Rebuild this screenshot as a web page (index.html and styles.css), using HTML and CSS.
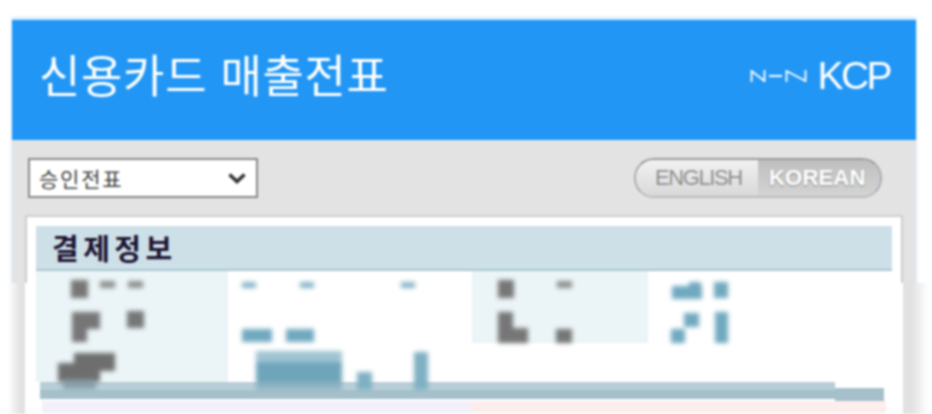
FILE: index.html
```html
<!DOCTYPE html>
<html lang="ko">
<head>
<meta charset="utf-8">
<title>신용카드 매출전표</title>
<link rel="stylesheet" href="styles.css">
</head>
<body>
<main class="panel">
  <div class="veil"></div>
  <header class="head">
    <h1 class="title">신용카드 매출전표</h1>
    <div class="logo">
      <svg class="nhn" width="58" height="14" viewBox="0 0 58 14" aria-hidden="true">
        <path d="M1.500 1v12M1.500 2l13 10M14.500 1v12M19 7h13M36.500 1v12M36.500 2l19 10M55.500 1v12" fill="none" stroke="#fff" stroke-width="1.800"/>
      </svg>
      <span class="kcp">KCP</span>
    </div>
  </header>
  <div class="tools">
    <div class="select">
      <span>승인전표</span>
      <svg width="20" height="12" viewBox="0 0 20 12" aria-hidden="true"><path d="M2.500 2.500 10 9.500l7.500-7" fill="none" stroke="#333" stroke-width="3.600"/></svg>
    </div>
    <div class="lang">
      <span class="en">ENGLISH</span>
      <span class="ko">KOREAN</span>
    </div>
  </div>
  <section class="card">
    <h2 class="sect">결제정보</h2>
    <div class="info">
      <div class="grid">
        <div class="lab lab-a"></div>
        <div class="val"></div>
        <div class="lab lab-b"></div>
        <div class="val"></div>
      </div>
      <div class="bar">
        <div class="bar-top"></div>
        <div class="bar-low"></div>
      </div>
      <div class="tint">
        <div class="tint-a"></div>
        <div class="tint-b"></div>
      </div>
    </div>
    <svg class="mask" width="878" height="199" viewBox="0 0 878 199" aria-hidden="true">
      <defs><filter id="soft" x="-20%" y="-20%" width="140%" height="140%"><feGaussianBlur stdDeviation="2"/></filter></defs>
      <g filter="url(#soft)">
        <g fill="#767676">
          <rect x="46" y="65" width="17" height="18"/>
          <rect x="47" y="97" width="28" height="17"/>
          <rect x="47" y="97" width="15" height="30"/>
          <rect x="102" y="96" width="17" height="17"/>
          <rect x="473" y="65" width="16" height="18"/>
          <rect x="473" y="97" width="15" height="31"/>
          <rect x="473" y="113" width="30" height="15"/>
          <rect x="531" y="114" width="16" height="14"/>
        </g>
        <g fill="#6e6e6e">
          <rect x="49" y="138" width="41" height="18"/>
          <rect x="33" y="148" width="42" height="19"/>
        </g>
        <rect x="38" y="165" width="33" height="9" fill="#86a0a8"/>
        <g fill="#8f8f8f">
          <rect x="75" y="66" width="15" height="7"/>
          <rect x="103" y="66" width="15" height="7"/>
          <rect x="532" y="66" width="15" height="7"/>
        </g>
        <g fill="#85b6c8">
          <rect x="217" y="67" width="14" height="6"/>
          <rect x="275" y="67" width="14" height="6"/>
          <rect x="376" y="67" width="14" height="6"/>
        </g>
        <g fill="#6fa9bf">
          <rect x="217" y="114" width="30" height="13"/>
          <rect x="261" y="114" width="28" height="13"/>
          <rect x="647" y="71" width="30" height="13"/>
          <rect x="664" y="67" width="12" height="8"/>
          <rect x="689" y="67" width="14" height="16"/>
          <rect x="646" y="114" width="14" height="14"/>
          <rect x="659" y="98" width="15" height="14"/>
          <rect x="690" y="97" width="13" height="31"/>
        </g>
        <rect x="231" y="136" width="86" height="12" fill="#a0c5d2"/>
        <rect x="231" y="147" width="86" height="21" fill="#6ea5bb"/>
        <rect x="231" y="167" width="86" height="8" fill="#8db2c1"/>
        <rect x="332" y="157" width="15" height="18" fill="#7fb0c3"/>
        <rect x="389" y="137" width="14" height="38" fill="#7fb0c3"/>
      </g>
    </svg>
  </section>
</main>
</body>
</html>
```
FILE: styles.css
```css
html, body {
  margin: 0;
  padding: 0;
  width: 932px;
  height: 414px;
  overflow: hidden;
  background: #fff;
}
.panel {
  position: relative;
  margin: 20px 0 0 12px;
  width: 904px;
  height: 394px;
  background: #e3e3e3;
  filter: blur(0.9px);
  box-shadow: 0 -2px 3px rgba(33, 150, 245, 0.3);
  font-family: "Noto Sans CJK KR", "Noto Sans", sans-serif;
}
.veil {
  position: absolute;
  left: -12px;
  top: 263px;
  width: 932px;
  height: 131px;
  background: linear-gradient(90deg, #fff 8px, #e2e2e2 20px, #e2e2e2 912px, #fff 928px);
}
.head {
  position: relative;
  height: 120px;
  background: #2196f5;
  display: flex;
  align-items: center;
  justify-content: space-between;
  padding: 0 26px 0 27px;
  box-sizing: border-box;
}
.title {
  margin: -12px 0 0;
  font-size: 45px;
  font-weight: 400;
  color: #fff;
  letter-spacing: 0.650px;
  line-height: 60px;
}
.logo {
  display: flex;
  align-items: center;
  gap: 10px;
  margin-top: -8px;
}
.kcp {
  font-family: "Liberation Sans", sans-serif;
  font-size: 39px;
  letter-spacing: -2.600px;
  color: #fff;
  line-height: 44px;
}
.tools {
  position: relative;
  display: flex;
  justify-content: space-between;
  padding: 18px 34px 0 16px;
  height: 75px;
  box-sizing: border-box;
}
.select {
  width: 230px;
  height: 40px;
  box-sizing: border-box;
  border: 2px solid #888;
  background: #fff;
  display: flex;
  align-items: center;
  justify-content: space-between;
  padding: 0 9px;
  font-size: 21px;
  letter-spacing: 1.800px;
  color: #444;
}
.lang {
  width: 248px;
  height: 40px;
  box-sizing: border-box;
  border: 2px solid #aaa;
  border-top-color: #999;
  border-bottom-color: #bbb;
  border-radius: 20px;
  display: flex;
  overflow: hidden;
  font-family: "Liberation Sans", sans-serif;
  font-size: 22px;
  line-height: 36px;
}
.en {
  width: 122px;
  padding-left: 19px;
  box-sizing: border-box;
  letter-spacing: -1.400px;
  color: #8f8f8f;
  background: linear-gradient(#f2f2f2, #d8d8d8);
}
.ko {
  flex: 1;
  padding-left: 11px;
  font-weight: 700;
  letter-spacing: 0.200px;
  color: #fff;
  text-shadow: 0 1px 2px #888;
  background: linear-gradient(#bfbfbf, #d4d4d4);
}
.card {
  position: relative;
  margin-left: 13px;
  width: 878px;
  height: 199px;
  box-sizing: border-box;
  background: #fff;
  padding-top: 11px;
}
.card::before {
  content: "";
  position: absolute;
  left: 0;
  top: 0;
  right: 0;
  height: 68px;
  box-sizing: border-box;
  border: 2px solid #cdcdcd;
  border-bottom: 0;
}
.sect {
  position: relative;
  margin: 0 11px;
  height: 45px;
  box-sizing: border-box;
  background: #cde0e8;
  border-bottom: 2px solid #a9c7d4;
  padding-left: 16px;
  font-size: 29px;
  line-height: 42px;
  font-weight: 700;
  letter-spacing: 4.500px;
  color: #1c1330;
}
.info {
  position: relative;
  margin: 0 11px;
}
.grid {
  display: grid;
  grid-template-columns: 192px 244px 176px 1fr;
  grid-template-rows: 72px 39px;
  height: 111px;
}
.lab {
  background: #ebf4f7;
}
.lab-a {
  grid-row: 1 / 3;
}
.lab-b {
  grid-column: 3;
}
.mask {
  position: absolute;
  left: 0;
  top: 0;
}
.bar {
  position: relative;
  margin-left: 4px;
}
.bar::after {
  content: "";
  position: absolute;
  left: 795px;
  top: 6px;
  width: 49px;
  height: 13px;
  background: #a5c0ca;
}
.bar-top {
  width: 795px;
  height: 8px;
  background: #b7ced6;
}
.bar-low {
  width: 795px;
  height: 9px;
  background: #a5c0ca;
}
.tint {
  display: flex;
  margin: 2px 0 0 6px;
  width: 844px;
  height: 12px;
}
.tint-a {
  width: 428px;
  background: #f3f0fa;
}
.tint-b {
  flex: 1;
  background: #fdeeee;
}
```
